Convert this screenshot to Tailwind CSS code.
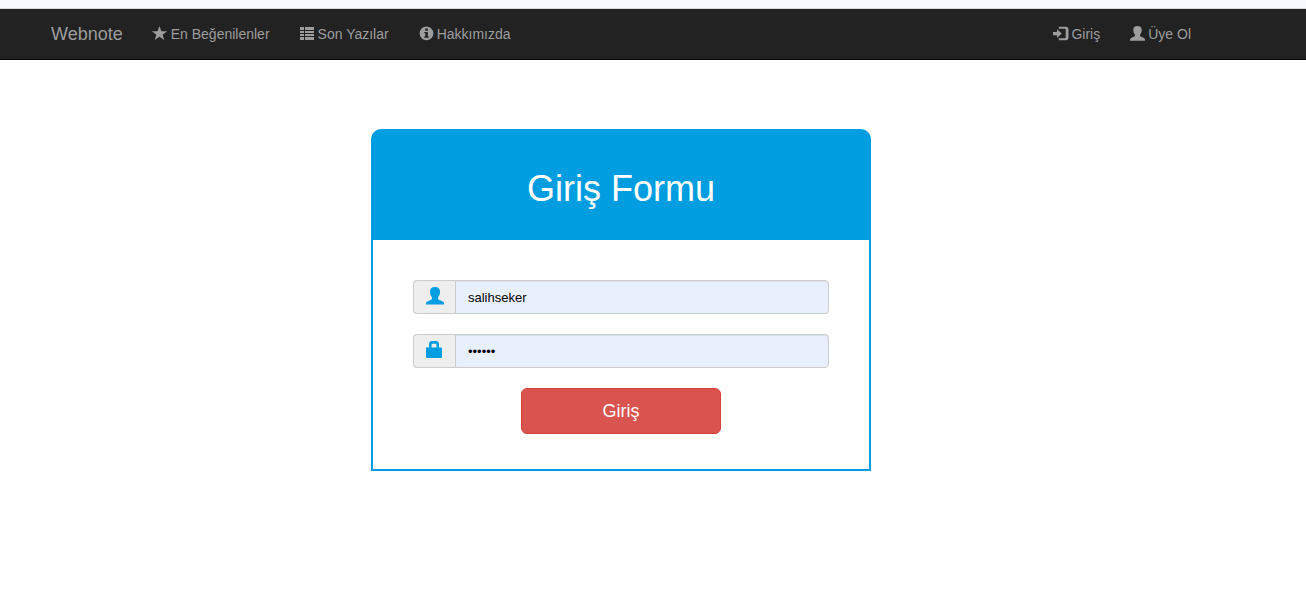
<!DOCTYPE html>
<html lang="tr">
<head>
<meta charset="utf-8">
<meta name="viewport" content="width=device-width, initial-scale=1">
<title>Webnote - Giriş</title>
<script src="https://cdn.jsdelivr.net/npm/@tailwindcss/browser@4"></script>
</head>
<body class="bg-white font-['Liberation_Sans',Arial,sans-serif] text-sm text-[#333]">
<svg class="hidden" aria-hidden="true">
  <symbol id="user" viewBox="0 0 16 16"><path d="M8 0C5 0 3.500 1.700 3.500 4.300C3.500 6.500 4.300 8.200 5.300 9.200V10.300C5.300 10.800 5 11.100 4.600 11.300L1.200 12.800C.4 13.200 0 13.700 0 14.400V15.600H16V14.400C16 13.700 15.600 13.200 14.800 12.800L11.400 11.300C11 11.100 10.700 10.800 10.700 10.300V9.200C11.700 8.200 12.500 6.500 12.500 4.300C12.500 1.700 11 0 8 0Z"/></symbol>
</svg>
<div class="h-2 bg-[#f8f9fa]"></div>
<nav class="border-t border-t-[#d8d9da] border-b border-b-[#080808] bg-[#222] pr-16">
  <div class="mx-auto flex h-[50px] max-w-[1170px] items-stretch text-[#9d9d9d]">
    <a href="#" class="flex items-center px-[15px] text-lg">Webnote</a>
    <a href="#" class="flex items-center gap-1 px-[15px]">
      <svg class="size-3.5 overflow-visible" viewBox="0 0 14 14" fill="currentColor" aria-hidden="true"><path d="M6.500-1 8.400 4.200H14.200L9.600 7.700 11.300 13 6.500 9.800 1.700 13 3.400 7.700-1.200 4.200H4.600Z"/></svg>
      En Beğenilenler</a>
    <a href="#" class="flex items-center gap-1 px-[15px]">
      <svg class="size-3.5 overflow-visible" viewBox="0 0 14 14" fill="currentColor" shape-rendering="crispEdges" aria-hidden="true"><path d="M0 0H4V3H0ZM5 0H14V3H5ZM0 4H4V6H0ZM5 4H14V6H5ZM0 7H4V9H0ZM5 7H14V9H5ZM0 10H4V13H0ZM5 10H14V13H5Z"/></svg>
      Son Yazılar</a>
    <a href="#" class="flex items-center gap-1 px-[15px]">
      <svg class="size-3.5 overflow-visible" viewBox="0 0 14 14" fill="currentColor" fill-rule="evenodd" aria-hidden="true"><path d="M7.500-.5A6.900 6.900 0 1 1 7.500 13.300A6.900 6.900 0 1 1 7.500-.5ZM6.300 1.500V3.700H8.800V1.500ZM5.300 5V6H6.300V9.500H5.300V10.700H9.800V9.500H8.800V5Z"/></svg>
      Hakkımızda</a>
    <div class="ml-auto flex">
      <a href="#" class="flex items-center gap-1 px-[15px]">
        <svg class="size-3.5 overflow-visible" viewBox="0 0 14 14" fill="currentColor" aria-hidden="true"><path d="M0 5H4V2.300L8.800 6.600 4 11V8.300H0ZM5.800-.3H12.500A3 3 0 0 1 15.500 2.700V10.300A3 3 0 0 1 12.500 13.300H5.800V11.200H12Q12.700 11.200 12.700 10.500V2.500Q12.700 1.800 12 1.800H5.800Z"/></svg>
        Giriş</a>
      <a href="#" class="flex items-center gap-1 px-[15px]">
        <svg class="size-3.5 overflow-visible" viewBox="0 0 14 14" fill="currentColor" aria-hidden="true"><use href="#user" y="-1" width="15" height="15"/></svg>
        Üye Ol</a>
    </div>
  </div>
</nav>
<main class="px-4 pt-[69px] pr-20">
  <section class="mx-auto max-w-[500px]">
    <h1 class="rounded-t-[10px] bg-[#009ee0] px-5 pt-10 pb-[31px] text-center text-4xl leading-10 text-white">Giriş Formu</h1>
    <form class="border-2 border-t-0 border-[#009ee0] px-10 pt-10 pb-[35px]" onsubmit="return false">
      <div class="mb-5 flex h-[34px]">
        <label for="username" class="flex w-[42px] justify-center rounded-l border border-r-0 border-[#ccc] bg-[#eee] pt-1.5 text-[#009ee0]">
          <svg class="size-[18px]" fill="currentColor" aria-hidden="true"><use href="#user"/></svg>
        </label>
        <input id="username" type="text" aria-label="Kullanıcı adı" value="salihseker" class="min-w-0 flex-1 rounded-r border border-[#ccc] bg-[#e8f0fe] px-3 pt-0.5 text-[13px] text-black shadow-[inset_0_1px_1px_rgba(0,0,0,0.075)] outline-none">
      </div>
      <div class="mb-5 flex h-[34px]">
        <label for="password" class="flex w-[42px] justify-center rounded-l border border-r-0 border-[#ccc] bg-[#eee] pt-1.5 text-[#009ee0]">
          <svg class="size-[18px]" viewBox="0 0 18 18" fill="currentColor" aria-hidden="true"><path d="M0 6.500H3V3Q3 0 6 0H10Q13 0 13 3V6.500H15Q16 6.500 16 7.500V16Q16 17 15 17H1Q0 17 0 16ZM5.500 6.500H10.500V4Q10.500 2.700 9.200 2.700H6.800Q5.500 2.700 5.500 4Z"/></svg>
        </label>
        <input id="password" type="password" aria-label="Şifre" value="123456" class="min-w-0 flex-1 rounded-r border border-[#ccc] bg-[#e8f0fe] px-3 pt-0.5 text-[13px] text-black shadow-[inset_0_1px_1px_rgba(0,0,0,0.075)] outline-none">
      </div>
      <button type="submit" class="mx-auto block h-[46px] w-[200px] rounded-md border border-[#d43f3a] bg-[#d9534f] text-lg text-white">Giriş</button>
    </form>
  </section>
</main>
</body>
</html>
